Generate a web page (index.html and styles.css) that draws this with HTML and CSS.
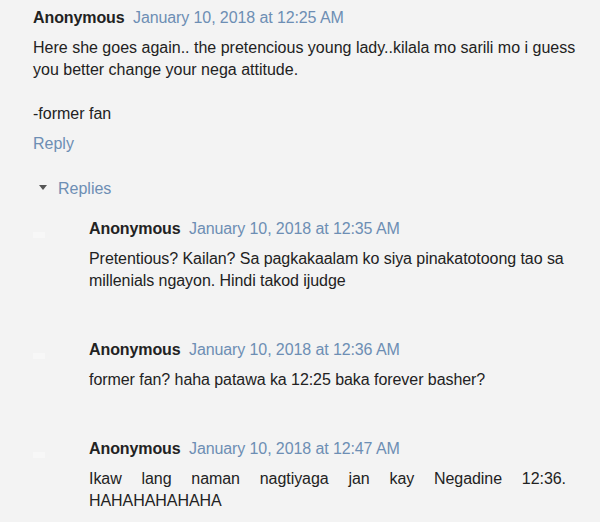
FILE: index.html
```html
<!DOCTYPE html>
<html>
<head>
<meta charset="utf-8">
<link rel="stylesheet" href="styles.css">
</head>
<body>
<div class="thread">
  <div class="comment">
    <div class="head"><span class="user">Anonymous</span> <span class="date">January 10, 2018 at 12:25 AM</span></div>
    <p class="body">Here she goes again.. the pretencious young lady..kilala mo sarili mo i guess you better change your nega attitude.<br><br>-former fan</p>
    <div class="reply">Reply</div>
  </div>
  <div class="replies-toggle"><span class="arrow"></span><span class="replies-label">Replies</span></div>
  <div class="replies">
    <div class="child">
      <span class="avatar"></span>
      <div class="child-content">
        <div class="head"><span class="user">Anonymous</span> <span class="date">January 10, 2018 at 12:35 AM</span></div>
        <p class="body">Pretentious? Kailan? Sa pagkakaalam ko siya pinakatotoong tao sa millenials ngayon. Hindi takod ijudge</p>
      </div>
    </div>
    <div class="child">
      <span class="avatar"></span>
      <div class="child-content">
        <div class="head"><span class="user">Anonymous</span> <span class="date">January 10, 2018 at 12:36 AM</span></div>
        <p class="body">former fan? haha patawa ka 12:25 baka forever basher?</p>
      </div>
    </div>
    <div class="child">
      <span class="avatar"></span>
      <div class="child-content">
        <div class="head"><span class="user">Anonymous</span> <span class="date">January 10, 2018 at 12:47 AM</span></div>
        <p class="body justify">Ikaw lang naman nagtiyaga jan kay Negadine 12:36. HAHAHAHAHAHA</p>
      </div>
    </div>
  </div>
</div>
</body>
</html>
```
FILE: styles.css
```css
html, body {
  margin: 0;
  padding: 0;
  background: #f3f3f3;
}
body {
  font-family: "Liberation Sans", Arial, sans-serif;
  font-size: 16px;
  color: #222;
  width: 600px;
  height: 522px;
  overflow: hidden;
}
.thread {
  padding: 7px 0 0 33px;
}
.comment {
  width: 560px;
}
.head {
  line-height: 22px;
}
.user {
  font-weight: bold;
  color: #222;
  letter-spacing: -0.1px;
}
.date {
  color: #6d8eb4;
  margin-left: 4px;
  letter-spacing: -0.1px;
}
.body {
  margin: 8px 0 0 0;
  line-height: 22px;
}
.reply {
  color: #6d8eb4;
  margin-top: 8px;
  line-height: 22px;
}
.replies-toggle {
  display: flex;
  align-items: center;
  margin: 23px 0 0 6px;
  line-height: 22px;
}
.arrow {
  width: 0;
  height: 0;
  border-left: 4px solid transparent;
  border-right: 4px solid transparent;
  border-top: 5px solid #555;
  margin-right: 11px;
  margin-top: -3px;
}
.replies-label {
  color: #6d8eb4;
}
.replies {
  margin-top: 18px;
}
.child {
  display: flex;
  margin-bottom: 47px;
}
.avatar {
  width: 12px;
  height: 6px;
  background: #f7f7f7;
  margin-top: 14px;
  margin-right: 44px;
  flex: none;
}
.child-content {
  width: 477px;
}
.child-content .body {
  letter-spacing: -0.06px;
}
.justify {
  text-align: justify;
}
```
